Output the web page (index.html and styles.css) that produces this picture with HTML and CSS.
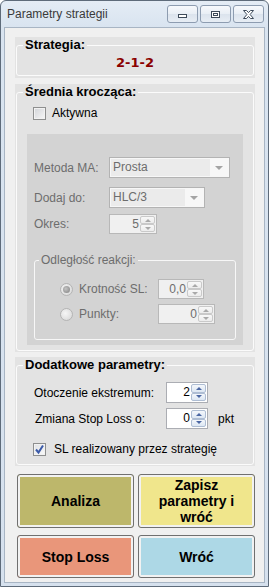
FILE: index.html
```html
<!DOCTYPE html>
<html lang="pl">

<head>
    <meta charset="UTF-8">
    <meta name="viewport" content="width=device-width, initial-scale=1.0">
    <title>Parametry strategii</title>
    <link rel="stylesheet" href="styles.css">
</head>

<body>
    <div class="window">
        <div class="titlebar">
            <span class="title">Parametry strategii</span>
            <div class="tbtns">
                <span class="tbtn">
                    <svg width="11" height="9" viewBox="0 0 11 9"><rect x="1.5" y="4.5" width="8" height="3" fill="#fff" stroke="#3d4a5a"/></svg>
                </span>
                <span class="tbtn">
                    <svg width="11" height="9" viewBox="0 0 11 9"><rect x="1.5" y="1.5" width="8" height="6" fill="#fff" stroke="#3d4a5a"/><rect x="3.5" y="3.5" width="4" height="2" fill="none" stroke="#3d4a5a"/></svg>
                </span>
                <span class="tbtn">
                    <svg width="13" height="11" viewBox="0 0 13 11"><path d="M1.5 1.5 L4.5 1.5 L6.5 3.6 L8.5 1.5 L11.5 1.5 L8.1 5.5 L11.5 9.5 L8.5 9.5 L6.5 7.4 L4.5 9.5 L1.5 9.5 L4.9 5.5 Z" fill="#fff" stroke="#3d4a5a"/></svg>
                </span>
            </div>
        </div>

        <div class="client">
            <div class="group">
                <fieldset>
                    <legend>Strategia:</legend>
                    <div class="strat">2-1-2</div>
                </fieldset>
            </div>

            <div class="group g2">
                <fieldset>
                    <legend>Średnia krocząca:</legend>
                    <label class="check"><span class="box"></span>Aktywna</label>
                    <div class="inner">
                        <div class="row first">
                            <span class="lbl">Metoda MA:</span>
                            <div class="combo c1"><span class="val">Prosta</span><span class="arr"></span></div>
                        </div>
                        <div class="row second">
                            <span class="lbl">Dodaj do:</span>
                            <div class="combo c2"><span class="val">HLC/3</span><span class="arr"></span></div>
                        </div>
                        <div class="row third">
                            <span class="lbl">Okres:</span>
                            <div class="spin dis s-okres"><span class="num">5</span><span class="ud"><i class="up"></i><i class="dn"></i></span></div>
                        </div>
                        <fieldset class="sub">
                            <legend>Odległość reakcji:</legend>
                            <div class="rrow r1">
                                <span class="radio on"></span>
                                <span class="rl">Krotność SL:</span>
                                <div class="spin dis s-krot"><span class="num">0,0</span><span class="ud"><i class="up"></i><i class="dn"></i></span></div>
                            </div>
                            <div class="rrow r2">
                                <span class="radio"></span>
                                <span class="rl">Punkty:</span>
                                <div class="spin dis s-pkt"><span class="num">0</span><span class="ud"><i class="up"></i><i class="dn"></i></span></div>
                            </div>
                        </fieldset>
                    </div>
                </fieldset>
            </div>

            <div class="group g3">
                <fieldset>
                    <legend>Dodatkowe parametry:</legend>
                    <div class="row prow p1">
                        <span class="plbl">Otoczenie ekstremum:</span>
                        <div class="spin s-en"><span class="num">2</span><span class="ud"><i class="up"></i><i class="dn"></i></span></div>
                    </div>
                    <div class="row prow p2">
                        <span class="plbl">Zmiana Stop Loss o:</span>
                        <div class="spin s-en"><span class="num">0</span><span class="ud"><i class="up"></i><i class="dn"></i></span></div>
                        <span class="unit">pkt</span>
                    </div>
                    <label class="check c-sl"><span class="box checked">
                        <svg width="11" height="11" viewBox="0 0 11 11"><path d="M2 5.5 L4.5 8.5 L9 1.5" fill="none" stroke="#3b5aa8" stroke-width="2"/></svg>
                    </span>SL realizowany przez strategię</label>
                </fieldset>
            </div>

            <div class="buttons">
                <div class="btn analiza">Analiza</div>
                <div class="btn zapisz">Zapisz<br>parametry i<br>wróć</div>
                <div class="btn stoploss">Stop Loss</div>
                <div class="btn wroc">Wróć</div>
            </div>
        </div>
    </div>
</body>

</html>
```

FILE: styles.css
```css
* {
    box-sizing: border-box;
}

body {
    margin: 0;
    background: #fff;
    font: 12px "Liberation Sans", Arial, sans-serif;
    color: #000;
}

.window {
    width: 269px;
    height: 587px;
    border: 1px solid #5e6b7a;
    border-radius: 6px 6px 0 0;
    background: linear-gradient(#e4ecf5, #d9e4f0 26px, #d6e1ee);
    padding: 0 3px 3px;
    display: flex;
    flex-direction: column;
}

/* title bar */
.titlebar {
    height: 26px;
    display: flex;
    align-items: flex-start;
    padding: 4px 1px 0 3px;
}

.title {
    flex: 1;
    line-height: 19px;
    color: #3a3a3a;
}

.tbtns {
    display: flex;
    gap: 2px;
}

.tbtn {
    width: 31px;
    height: 18px;
    border: 1px solid #8d9cb0;
    border-radius: 3px;
    background: linear-gradient(#f7f9fc, #e8eef5 50%, #dbe3ed 51%, #e7edf4);
    display: flex;
    align-items: center;
    justify-content: center;
}

/* client area */
.client {
    flex: 1;
    border: 1px solid #a8b5c4;
    background: #f0f0f0;
    padding: 9px 0 0 10px;
}

.group {
    width: 240px;
    background: #e3e3e3;
    padding: 1px 1px 2px;
}

.group fieldset {
    margin: 0;
    padding: 0;
    min-width: 0;
    border: 1px solid #fbfbfb;
    border-radius: 3px;
}

.group legend {
    font: bold 13px/14px "Liberation Sans", Arial, sans-serif;
    padding: 0 2px;
    margin-left: 6px;
}

.strat {
    margin-top: 2px;
    padding-bottom: 3px;
    text-align: center;
    font: bold 13px/18px "DejaVu Sans", sans-serif;
    color: #8b0000;
}

.g2 {
    margin-top: 6px;
    padding-bottom: 1px;
}

.g2 > fieldset {
    padding-bottom: 5px;
}

.check {
    display: flex;
    align-items: center;
    height: 16px;
    margin-top: 6px;
    padding-left: 16px;
}

.box {
    width: 13px;
    height: 13px;
    border: 1px solid #8e8f8f;
    background: linear-gradient(135deg, #d2d4d8, #f7f7f7);
    box-shadow: inset 0 0 0 1px #f2f2f2;
    margin-right: 6px;
    display: flex;
    align-items: center;
    justify-content: center;
}

.box.checked {
    background: linear-gradient(135deg, #dfe1e5, #fafafa);
}

/* disabled inner panel */
.inner {
    margin: 13px 10px 0;
    background: #d3d3d3;
    padding: 23px 0 5px 7px;
    color: #6d6d6d;
}

.row {
    display: flex;
    align-items: center;
}

.lbl {
    width: 75px;
}

.first {
    height: 21px;
}

.second {
    height: 21px;
    margin-top: 9px;
}

.third {
    height: 20px;
    margin-top: 6px;
}

.combo {
    height: 21px;
    border: 1px solid #b3b3b3;
    background: #f7f7f7;
    display: flex;
    padding: 1px;
}

.c1 {
    width: 121px;
}

.c2 {
    width: 96px;
}

.combo .val {
    flex: 1;
    background: #ebebeb;
    line-height: 17px;
    padding-left: 2px;
}

.combo .arr {
    width: 18px;
    display: flex;
    align-items: center;
    justify-content: center;
}

.combo .arr::after {
    content: "";
    border-top: 4px solid #a4a4a4;
    border-left: 4px solid transparent;
    border-right: 4px solid transparent;
}

/* numeric up-down */
.spin {
    height: 20px;
    border: 1px solid #b8b8b8;
    background: #f0f0f0;
    display: flex;
    padding: 1px;
}

.spin .num {
    flex: 1;
    text-align: right;
    padding-right: 1px;
    line-height: 16px;
}

.spin .ud {
    width: 15px;
    display: flex;
    flex-direction: column;
}

.spin .ud i {
    flex: 1;
    border: 1px solid #c9c9c9;
    border-radius: 2px;
    background: linear-gradient(#f8f8f8, #ececec);
    display: flex;
    align-items: center;
    justify-content: center;
}

.spin .ud i::after {
    content: "";
    border-left: 3px solid transparent;
    border-right: 3px solid transparent;
}

.spin .ud .up::after {
    border-bottom: 3px solid #a9a9a9;
}

.spin .ud .dn::after {
    border-top: 3px solid #a9a9a9;
}

.s-okres {
    width: 48px;
}

.s-krot {
    width: 46px;
}

.s-pkt {
    width: 57px;
}

.s-en {
    width: 42px;
    height: 21px;
    background: #fff;
    border-color: #abadb3;
}

.s-en .num {
    line-height: 17px;
}

.s-en .ud i {
    border-color: #aebdd3;
    background: linear-gradient(#f4f7fb, #dde7f3);
}

.s-en .ud .up::after {
    border-bottom-color: #4b67a3;
}

.s-en .ud .dn::after {
    border-top-color: #4b67a3;
}

/* Odległość reakcji */
.inner .sub {
    display: block;
    margin: 19px 0 0;
    width: 202px;
    min-width: 0;
    padding: 0 0 15px 0;
    border: 1px solid #f7f7f7;
    border-radius: 3px;
}

.inner .sub legend {
    font: 12px/14px "Liberation Sans", Arial, sans-serif;
    padding: 0 2px;
    margin-left: 4px;
}

.rrow {
    display: flex;
    align-items: center;
    height: 20px;
    padding-left: 25px;
}

.r1 {
    margin-top: 12px;
}

.r2 {
    margin-top: 5px;
}

.radio {
    width: 13px;
    height: 13px;
    border: 1px solid #b4b4b4;
    border-radius: 50%;
    background: radial-gradient(circle at 40% 40%, #f6f6f6, #d4d4d4);
    margin-right: 6px;
    display: flex;
    align-items: center;
    justify-content: center;
}

.radio.on::after {
    content: "";
    width: 7px;
    height: 7px;
    border-radius: 50%;
    background: radial-gradient(circle at 40% 40%, #c4c4c4, #808080);
}

.rl {
    width: 79px;
}

/* Dodatkowe parametry */
.g3 {
    margin-top: 5px;
    padding-bottom: 1px;
}

.g3 > fieldset {
    padding-bottom: 7px;
}

.prow {
    height: 21px;
    padding-left: 17px;
}

.p1 {
    margin-top: 10px;
}

.p2 {
    margin-top: 5px;
}

.plbl {
    width: 132px;
}

.p2 .plbl {
    padding-left: 1px;
}

.unit {
    margin-left: 10px;
}

.c-sl {
    margin-top: 12px;
}

.c-sl .box {
    margin-right: 8px;
}

/* buttons */
.buttons {
    margin: 8px 0 0 2px;
    display: grid;
    grid-template-columns: 117px 117px;
    grid-template-rows: 54px 43px;
    column-gap: 4px;
    row-gap: 7px;
}

.btn {
    border: 1px solid #707070;
    border-radius: 3px;
    box-shadow: inset 0 0 0 2px #f2f2f2;
    font: bold 14px/16px "Liberation Sans", Arial, sans-serif;
    display: flex;
    align-items: center;
    justify-content: center;
    text-align: center;
}

.analiza {
    background: #bdb76b;
}

.zapisz {
    background: #f0e68c;
}

.stoploss {
    background: #e9967a;
}

.wroc {
    background: #add8e6;
}
```
